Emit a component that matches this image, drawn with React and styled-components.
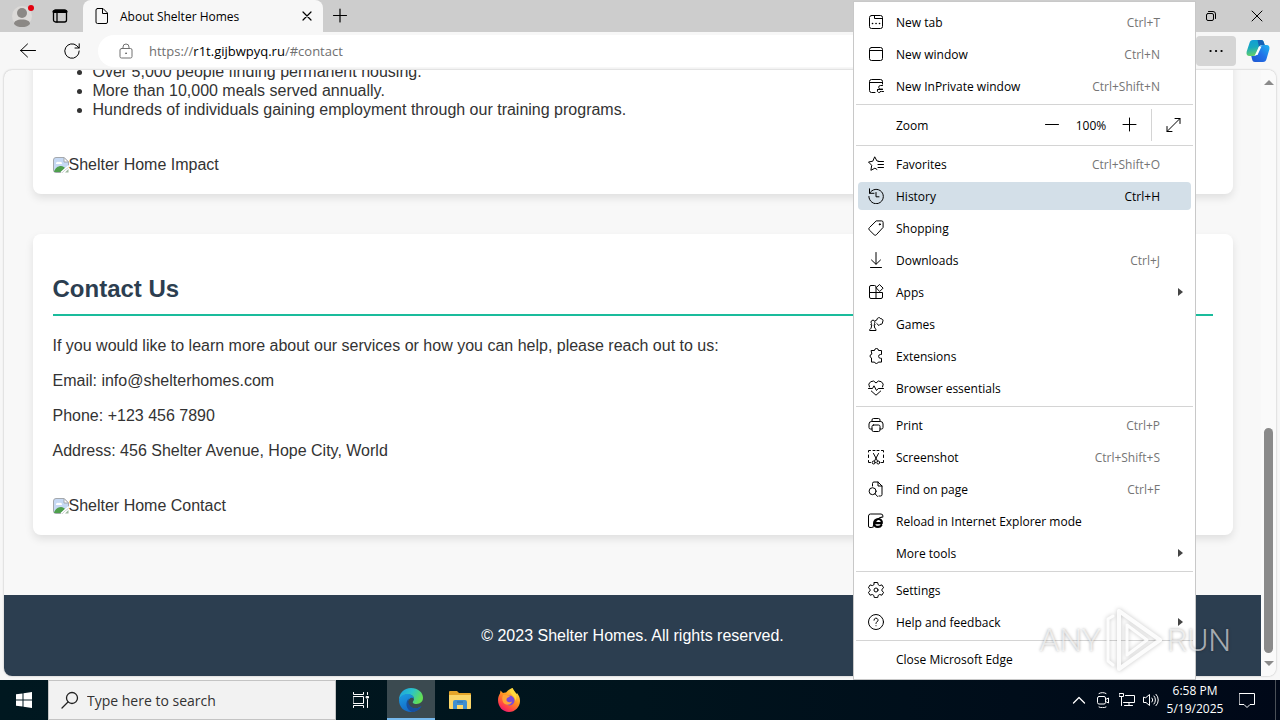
import styled, { createGlobalStyle } from 'styled-components'

const GlobalStyle = createGlobalStyle`
    * {
        box-sizing: border-box;
    }
    body {
        margin: 0;
        font-family: "Open Sans", "Noto Sans", sans-serif;
        font-size: 12px;
        color: #000;
    }
    button, input {
        font-family: inherit;
        font-size: inherit;
        color: inherit;
        border: none;
        background: none;
        padding: 0;
        outline: none;
    }
    svg {
        display: block;
        flex: none;
    }
`

const Desktop = styled.div`
    position: relative;
    display: flex;
    flex-direction: column;
    height: 100vh;
    overflow: hidden;
    background-color: #f7f7f7;
`

/* browser chrome */
const TabStrip = styled.header`
    display: flex;
    align-items: stretch;
    height: 32px;
    background-color: #cdcdcd;
`
const IconButton = styled.button`
    position: relative;
    display: flex;
    align-items: center;
    justify-content: center;
    flex: none;
    width: ${({ $width }) => $width}px;
    height: ${({ $height }) => $height || 32}px;
    border-radius: ${({ $active }) => ($active ? '4px' : '0')};
    background-color: ${({ $active }) => ($active ? '#d5d5d5' : 'transparent')};
`
const Tab = styled.div`
    display: flex;
    align-items: center;
    gap: 10px;
    width: 240px;
    margin-left: 6px;
    padding: 0 8px 0 11px;
    border-radius: 8px 8px 0 0;
    background-color: #f7f7f7;
`
const TabTitle = styled.span`
    flex: 1;
    white-space: nowrap;
`
const WindowButtons = styled.div`
    display: flex;
    margin-left: auto;
`
const Toolbar = styled.nav`
    display: flex;
    align-items: center;
    height: 38px;
    padding-left: 6px;
`
const AddressBar = styled.label`
    display: flex;
    align-items: center;
    flex: 1;
    gap: 15px;
    height: 32px;
    margin: 0 8px 0 4px;
    padding-left: 20px;
    border-radius: 16px;
    background-color: #fff;
    font-size: 13px;
    color: #707070;
`
const Url = styled.a`
    color: #707070;
    text-decoration: none;
    strong {
        font-weight: 400;
        color: #000;
    }
`

/* web page */
const Viewport = styled.div`
    display: flex;
    flex: 1;
    min-height: 0;
    margin: 0 4px 4px;
    border-radius: 8px;
    overflow: hidden;
    background-color: #f8f8f8;
    box-shadow: 0 0 2px rgba(0, 0, 0, 0.3);
`
const Page = styled.div`
    display: flex;
    flex: 1;
    flex-direction: column;
    justify-content: flex-end;
    overflow: hidden;
    font-family: "Liberation Sans", Arial, sans-serif;
    font-size: 16px;
    line-height: 19px;
    color: #333;
`
const Sections = styled.main`
    display: flex;
    flex-direction: column;
    gap: 40px;
    width: 100%;
    max-width: 1200px;
    margin: 0 auto 60px;
`
const Card = styled.section`
    padding: 20px;
    border-radius: 8px;
    background-color: #fff;
    box-shadow: 0 4px 8px rgba(0, 0, 0, 0.1);
`
const Heading = styled.h2`
    margin: 20px 0;
    padding-bottom: 11px;
    border-bottom: 2px solid #1abc9c;
    font-size: 24px;
    line-height: 29px;
    color: #2c3e50;
`
const Paragraph = styled.p`
    margin: 0 0 16px;
`
const List = styled.ul`
    margin: 0 0 16px;
    padding-left: 40px;
`
const MissingImage = styled.div`
    display: flex;
    align-items: center;
    margin-top: 36px;
`
const Footer = styled.footer`
    padding: 31px 20px;
    background-color: #2c3e50;
    color: #fff;
    text-align: center;
`
const Scrollbar = styled.div`
    display: flex;
    flex-direction: column;
    align-items: center;
    justify-content: flex-end;
    gap: 8px;
    width: 15px;
    padding: 10px 0;
    background-color: #fafafa;
`
const Thumb = styled.div`
    width: 9px;
    height: 225px;
    border-radius: 5px;
    background-color: #8a8a8a;
`
const Triangle = styled.div`
    border: 5px solid transparent;
    ${({ $up }) => ($up ? 'border-bottom-color: #8a8a8a; border-top: none; margin-bottom: auto;' : 'border-top-color: #8a8a8a; border-bottom: none;')}
`

/* settings menu, open over the page */
const Menu = styled.div`
    position: absolute;
    top: 1px;
    right: 84px;
    display: flex;
    flex-direction: column;
    width: 343px;
    padding: 4px 0;
    border: 1px solid #c8c8c8;
    background-color: #fff;
`
const MenuSection = styled.div`
    display: flex;
    flex-direction: column;
    gap: 4px;
    padding: 2px 4px;
`
const MenuItem = styled.button`
    display: flex;
    align-items: center;
    gap: 12px;
    height: 28px;
    padding: 0 8px 0 10px;
    border-radius: 4px;
    text-align: left;
    background-color: ${({ $selected }) => ($selected ? '#d3dfe8' : 'transparent')};
`
const MenuIcon = styled.span`
    width: 16px;
    height: 16px;
`
const Shortcut = styled.span`
    margin-left: auto;
    margin-right: 23px;
    color: ${({ $selected }) => ($selected ? '#000' : '#757575')};
`
const SubmenuArrow = styled.span`
    margin-left: auto;
    border-left: 5px solid #444;
    border-top: 4px solid transparent;
    border-bottom: 4px solid transparent;
`
const Separator = styled.hr`
    width: calc(100% - 4px);
    height: 1px;
    margin: 2px;
    border: none;
    background-color: #d4d4d4;
`
const ZoomRow = styled.div`
    display: flex;
    align-items: center;
    height: 36px;
    padding-left: 42px;
    > span:first-child {
        flex: 1;
    }
`
const ZoomValue = styled.span`
    width: 40px;
    text-align: center;
`
const FullScreen = styled.div`
    margin-left: 2px;
    border-left: 1px solid #d4d4d4;
`

/* taskbar */
const Taskbar = styled.footer`
    display: flex;
    align-items: center;
    height: 40px;
    background: linear-gradient(90deg, #001820, #00141d 50%, #000818);
    color: #fff;
`
const SearchBox = styled.label`
    display: flex;
    align-items: center;
    gap: 8px;
    width: 288px;
    height: 40px;
    padding-left: 12px;
    border: 1px solid #c4c4c4;
    background-color: #f2f2f2;
    color: #222;
    input {
        flex: 1;
        min-width: 0;
        font-size: 14px;
    }
    input::placeholder {
        color: #333;
        opacity: 1;
    }
`
const TaskButtons = styled.div`
    display: flex;
    gap: 1px;
`
const TaskButton = styled(IconButton)`
    background-color: ${({ $open }) => ($open ? '#3b4a50' : 'transparent')};
    box-shadow: ${({ $open }) => ($open ? 'inset 0 -2px #76b9ed' : 'none')};
`
const Tray = styled.div`
    display: flex;
    align-items: center;
    height: 100%;
    margin-left: auto;
    padding-right: 4px;
`
const Clock = styled.div`
    width: 64px;
    line-height: 18px;
    text-align: center;
`
const ShowDesktop = styled.div`
    width: 1px;
    height: 40px;
    margin-left: 8px;
    background-color: #4a5058;
`

/* recorder's mark, laid over everything */
const Watermark = styled.div`
    position: absolute;
    right: 49px;
    bottom: 48px;
    display: flex;
    align-items: center;
    gap: 3px;
    font-family: Roboto, "Liberation Sans", sans-serif;
    font-size: 32px;
    font-weight: 300;
    line-height: 1;
    color: rgba(255, 255, 255, 0.6);
    text-shadow: 0 0 3px rgba(0, 0, 0, 0.35);
    pointer-events: none;
    svg {
        filter: drop-shadow(0 0 2px rgba(0, 0, 0, 0.25));
    }
`

function Icon({ size = 16, box = 16, width = 1, color = 'currentColor', children }) {
    return (
        <svg width={size} height={size} viewBox={`0 0 ${box} ${box}`} fill="none" stroke={color} strokeWidth={width} strokeLinecap="round" strokeLinejoin="round">
            {children}
        </svg>
    )
}

const icons = {
    newTab: <><rect x="1.5" y="1.5" width="13" height="13" rx="2" /><path d="M6.5 1.5v3h8" /><path d="M4.5 9.5h.1M8 9.5h.1M11.5 9.5h.1" strokeWidth="1.6" /></>,
    newWindow: <><rect x="1.5" y="1.5" width="13" height="13" rx="2" /><path d="M1.5 4.5h13" /></>,
    inPrivate: <><path d="M7 14.5H3.5a2 2 0 0 1-2-2v-9a2 2 0 0 1 2-2h9a2 2 0 0 1 2 2V6M1.5 4.5h13M14.5 7.5h-2a1.8 1.8 0 0 0 0 3.6h2M9.5 11.5h5M15.5 13.5h-1.8M12.8 13.3a1.8 1.8 0 1 1-3.4-1.2" /></>,
    favorites: <><path d="M10.5 5.2 9 5 6.7.8 4.8 5.2.5 6l3.2 3.3-.8 5 4-2.1 2 1.2M10.5 5.5h5M10 8.5h5.5M10 11.5h5.5" /></>,
    history: <><path d="M1.5.8v4.5H6M1.7 5.2A7.2 7.2 0 1 1 .9 8.5M8 4.5v4.3h3" /></>,
    shopping: <><path d="M8.6.9h5a1.5 1.5 0 0 1 1.5 1.5v5l-6.800 7.400a1.500 1.500 0 0 1-2.100 0L1.200 9.900a1.500 1.500 0 0 1 0-2.100z" /><circle cx="11.8" cy="4.3" r=".6" fill="currentColor" /></>,
    downloads: <path d="M8 .5V12M3.5 8 8 12.3 12.500 8M2.500 15.500h11" />,
    apps: <><path d="M8 8.500v6M1.500 8.500h13V13a1.500 1.500 0 0 1-1.500 1.500H3A1.500 1.500 0 0 1 1.500 13V3A1.500 1.500 0 0 1 3 1.500h3.500A1.500 1.500 0 0 1 8 3v5.500M11.700.8l3.400 3.300-3.400 3.400-3.300-3.400z" /></>,
    games: <><path d="M2 14.500h6v-1.200l-1.200-1.100-.7-3.400h1L6.500 7.500a2 2 0 1 0-3 0l-.7 1.300h1l-.7 3.400L2 13.300z" /><path d="M7.500 4.500 9 3.800a2 2 0 0 1 3.800-1 1.900 1.900 0 0 1 1.700 3.200 1.900 1.900 0 0 1-2.500 2.300l-1 1.300-2.200-2" /></>,
    extensions: <path d="M3.500 2.500h3a2 2 0 0 1 4 0h3v4h-1a1.800 1.800 0 0 0 0 3.800h1v3.800h-3.200a2 2 0 0 1-3.800 0h-3v-4.200a1.900 1.900 0 0 1 0-3.700z" />,
    essentials: <path d="M1.400 7A3.800 3.800 0 0 1 8 3a3.800 3.800 0 0 1 6.600 4M.5 8.500h4L6 5.800l2.500 4.700 1.700-2h5.300M3.300 11 8 15.200l4.700-4.200" />,
    print: <><path d="M4 12H2.500A1.500 1.500 0 0 1 1 10.500V7a2.500 2.500 0 0 1 2.500-2.500h9A2.500 2.500 0 0 1 15 7v3.500a1.500 1.500 0 0 1-1.500 1.500H12M4 4.500V3a1.500 1.500 0 0 1 1.500-1.500h5A1.500 1.500 0 0 1 12 3v1.500" /><rect x="4" y="8" width="8" height="6.5" rx="1.5" /></>,
    screenshot: <><path d="M2.500 1.500h-2V3M.5 6v2.500M.5 11.500v2h2M5 1.500h2M9 1.500h2M13.500 1.500h2V3M15.500 6v2.500M15.500 11.500v2h-2M5.500 4.500l4 7.500M10.500 4.500l-4 7.500" /><circle cx="5.7" cy="13.5" r="1.5" /><circle cx="10.3" cy="13.5" r="1.5" /></>,
    find: <><path d="M4.500 5V2.500A1.500 1.500 0 0 1 6 1h4l4 4v8.500a1.500 1.500 0 0 1-1.500 1.500H11M10 1v4h4M6.800 12.500l2.800 3" /><circle cx="4.6" cy="10.2" r="3.5" /></>,
    reload: <><path d="M3.500 14.500H2A1.500 1.500 0 0 1 .5 13V3a2 2 0 0 1 2-2H13a2 2 0 0 1 2 2" /><path d="M6.500 10.200h7.300c.3-2.600-1.200-4.200-3.500-4.200-2.500 0-4.200 1.800-4.200 4.200 0 2.300 1.700 3.700 3.900 3.700 1.600 0 2.700-.6 3.300-1.700" strokeWidth="2.2" /><path d="M14.800 3.800C11 4 6 8.500 4.800 14.500" strokeWidth="1.2" /></>,
    settings: <><path d="M6.300.5h3.400l.5 2.200 1.500.9 2.200-.7 1.700 2.900-1.700 1.500v1.500l1.700 1.500-1.700 2.900-2.200-.7-1.500.9-.5 2.200H6.300l-.5-2.200-1.500-.9-2.200.7L.4 10.300l1.700-1.500V7.300L.4 5.800l1.700-2.900 2.200.7 1.500-.9z" /><circle cx="8" cy="8" r="2" /></>,
    help: <><circle cx="8" cy="8" r="7.5" /><path d="M6 6.200a2 2 0 1 1 3 1.700c-.7.4-1 .8-1 1.600M8 11.700v.1" /></>,
}

const menuGroups = [
    [
        { icon: 'newTab', label: 'New tab', shortcut: 'Ctrl+T' },
        { icon: 'newWindow', label: 'New window', shortcut: 'Ctrl+N' },
        { icon: 'inPrivate', label: 'New InPrivate window', shortcut: 'Ctrl+Shift+N' },
    ],
    'zoom',
    [
        { icon: 'favorites', label: 'Favorites', shortcut: 'Ctrl+Shift+O' },
        { icon: 'history', label: 'History', shortcut: 'Ctrl+H', selected: true },
        { icon: 'shopping', label: 'Shopping' },
        { icon: 'downloads', label: 'Downloads', shortcut: 'Ctrl+J' },
        { icon: 'apps', label: 'Apps', submenu: true },
        { icon: 'games', label: 'Games' },
        { icon: 'extensions', label: 'Extensions' },
        { icon: 'essentials', label: 'Browser essentials' },
    ],
    [
        { icon: 'print', label: 'Print', shortcut: 'Ctrl+P' },
        { icon: 'screenshot', label: 'Screenshot', shortcut: 'Ctrl+Shift+S' },
        { icon: 'find', label: 'Find on page', shortcut: 'Ctrl+F' },
        { icon: 'reload', label: 'Reload in Internet Explorer mode' },
        { label: 'More tools', submenu: true },
    ],
    [
        { icon: 'settings', label: 'Settings' },
        { icon: 'help', label: 'Help and feedback', submenu: true },
    ],
    [{ label: 'Close Microsoft Edge' }],
]

function Zoom() {
    return (
        <ZoomRow>
            <span>Zoom</span>
            <IconButton $width={38} aria-label="Zoom out"><Icon><path d="M1.500 7.500h13" /></Icon></IconButton>
            <ZoomValue>100%</ZoomValue>
            <IconButton $width={38} aria-label="Zoom in"><Icon><path d="M1 7.500h13M7.500 1v13" /></Icon></IconButton>
            <FullScreen>
                <IconButton $width={43} aria-label="Full screen"><Icon><path d="M1 14.500l13-13M9 1.500h5v5M1 9.500v5h5" /></Icon></IconButton>
            </FullScreen>
        </ZoomRow>
    )
}

function MenuGroup({ group }) {
    if (group === 'zoom') return <Zoom />
    return (
        <MenuSection>
            {group.map(({ icon, label, shortcut, selected, submenu }) => (
                <MenuItem key={label} $selected={selected}>
                    <MenuIcon>{icon && <Icon>{icons[icon]}</Icon>}</MenuIcon>
                    {label}
                    {shortcut && <Shortcut $selected={selected}>{shortcut}</Shortcut>}
                    {submenu && <SubmenuArrow />}
                </MenuItem>
            ))}
        </MenuSection>
    )
}

function BrokenImage({ alt }) {
    return (
        <MissingImage>
            <svg width="16" height="16" viewBox="0 0 16 16">
                <path d="M3 .5h8L15.500 5v5L9 15.500H3A2.500 2.500 0 0 1 .5 13V3A2.500 2.500 0 0 1 3 .5z" fill="#c6d9f4" stroke="#a4a8ad" />
                <path d="M3 7a2 2 0 0 1 3-2 2 2 0 0 1 3 2z" fill="#fff" />
                <path d="M1 15c1-4 4-6 7-6 2 0 3 1 4 2l-4 4z" fill="#4e9f4c" />
                <path d="M11 .5V5h4.500z" fill="#fff" stroke="#a4a8ad" />
                <path d="m8 15.500 8-7" stroke="#fff" strokeWidth="1.5" />
                <path d="M12 15.500h3.500V12z" fill="#9db79d" />
            </svg>
            {alt}
        </MissingImage>
    )
}

function EdgeLogo() {
    return (
        <svg width="24" height="24" viewBox="0 0 24 24">
            <defs>
                <linearGradient id="edgeTop" x1="0" y1="0" x2="1" y2="0.4">
                    <stop offset="0" stopColor="#1b9de2" />
                    <stop offset="0.55" stopColor="#2bc3c9" />
                    <stop offset="1" stopColor="#62de55" />
                </linearGradient>
                <linearGradient id="edgeSide" x1="0" y1="0" x2="0.5" y2="1">
                    <stop offset="0" stopColor="#1b9de2" />
                    <stop offset="1" stopColor="#1466c4" />
                </linearGradient>
            </defs>
            <path d="M0 12C0 5 5 0 12 0c7 0 12 4.500 12 9.800 0 4-3 6.200-6.300 6.200-2.400 0-4-.8-4-1.800 0-.7 1.300-1.200 1.300-3.400C15 8 12 6.500 9 6.500 4 6.500 1 9 0 12z" fill="url(#edgeTop)" />
            <path d="M0 12c1-4 4.500-6 8.500-6 3.500 0 6.500 2 6.500 5-1-1.500-2.500-1.500-3.500-1C8 12 8 17 12 19.500c3.500 2 7.500 1 10.500-1.500C20 22 16 24 12 24 5 24 0 19 0 12z" fill="url(#edgeSide)" />
            <path d="M10 10.500c-4 3-3.500 11 3 13.500 4 0 8-2.500 9.500-6-3 2.500-7 3-10 1-3-2-4-5.500-2.500-8.500z" fill="#174f9e" />
        </svg>
    )
}

function FolderLogo() {
    return (
        <svg width="22" height="20" viewBox="0 0 22 20">
            <path d="M0 2a1 1 0 0 1 1-1h7l2 2h11a1 1 0 0 1 1 1v3H0z" fill="#e5a529" />
            <path d="M0 5h22v13a1 1 0 0 1-1 1H1a1 1 0 0 1-1-1z" fill="#fbd669" />
            <path d="M4 19v-7a2 2 0 0 1 2-2h10a2 2 0 0 1 2 2v7h-4v-4H8v4z" fill="#3f8fd0" />
            <path d="M8 12h6" stroke="#2a6ca8" />
        </svg>
    )
}

function FirefoxLogo() {
    return (
        <svg width="24" height="24" viewBox="0 0 24 24">
            <defs>
                <linearGradient id="fox" x1="0.8" y1="0" x2="0.2" y2="1">
                    <stop offset="0" stopColor="#fff044" />
                    <stop offset="0.45" stopColor="#ff9020" />
                    <stop offset="0.8" stopColor="#ff3a4c" />
                    <stop offset="1" stopColor="#e3107c" />
                </linearGradient>
            </defs>
            <path d="M1 12c0-3 1-5 2-6.500l.5-3L6 5c1-.5 2-.7 3-.5C11 2 13 1 15.500 0c0 2 1 3 2.500 4l1.500 2L20 5c2 2.500 3 5 3 8 0 6-5 11-11 11S1 19 1 12z" fill="url(#fox)" />
            <circle cx="12.5" cy="12.5" r="5" fill="#7b4bd8" />
            <path d="M6 7c2-1 4 .5 6 .5 1 0 1.500.8 0 1.600-1.500.9-2.500 1-2.500 2.900 0 2 3 3 5.500 1.500-1 4-7 4.500-9 .5-1-2-1-5 0-7z" fill="#ffa436" />
            <path d="M13 3c0 4 6 5 5 10 2-3 2-6 0-9L15.500 0C14 1 13 2 13 3z" fill="#ffd83d" />
        </svg>
    )
}

function CopilotLogo() {
    return (
        <svg width="24" height="24" viewBox="0 0 24 24">
            <defs>
                <linearGradient id="copLeft" x1="0" y1="0" x2="0.2" y2="1">
                    <stop offset="0" stopColor="#109cd8" />
                    <stop offset="0.5" stopColor="#18a9bf" />
                    <stop offset="1" stopColor="#63cf6a" />
                </linearGradient>
                <linearGradient id="copRight" x1="1" y1="0" x2="0" y2="1">
                    <stop offset="0" stopColor="#1cb6f0" />
                    <stop offset="0.5" stopColor="#2271e8" />
                    <stop offset="1" stopColor="#1e55d0" />
                </linearGradient>
            </defs>
            <path d="M7 1h8c2 0 2.500 1 3 3l.7 2H16c-2 0-3 1-3.500 3l-2 5c-.6 2-1.500 3-3.500 3H3.500C1 17 0 15 .7 12.500L3.500 4C4 2 5 1 7 1z" fill="url(#copLeft)" />
            <path d="M17 23H9c-2 0-2.500-1-3-3l-.7-3H8c2 0 3-1 3.500-3l2-5c.6-2 1.500-3 3.500-3h3.500c2.500 0 3.500 2 2.800 4.500L20.500 20c-.5 2-1.500 3-3.500 3z" fill="url(#copRight)" />
            <path d="M11.500 1H15c2 0 2.500 1 3 3l.7 2H16c-1.500 0-2.500.6-3 2z" fill="#1560b4" />
            <path d="M13 7.500h2.500L11.500 16H9z" fill="#fff" />
        </svg>
    )
}

function BrowserChrome() {
    return (
        <>
            <TabStrip>
                <IconButton $width={43} aria-label="Profile">
                    <svg width="24" height="24" viewBox="0 0 24 24">
                        <circle cx="12" cy="12" r="10" fill="#dcdad8" />
                        <circle cx="12" cy="9" r="5" fill="#8b8885" />
                        <path d="M4 20c0-3 3-4.500 8-4.500s8 1.500 8 4.500c-2 2.500-5 3-8 3s-6-.5-8-3z" fill="#8b8885" />
                        <circle cx="21" cy="4" r="3" fill="#e3000f" />
                    </svg>
                </IconButton>
                <IconButton $width={34} aria-label="Tab actions">
                    <Icon><rect x="1.5" y="2" width="13" height="12" rx="2" strokeWidth="1.3" /><path d="M2 3.500h12" strokeWidth="3" /><path d="M5 4v10" strokeWidth="1.3" /></Icon>
                </IconButton>
                <Tab>
                    <Icon><path d="M3.500.5H9L13.500 5v9a1.500 1.500 0 0 1-1.500 1.500H3.500A1.500 1.500 0 0 1 2 14V2A1.500 1.500 0 0 1 3.500.5zM8.500.5v5h5" /></Icon>
                    <TabTitle>About Shelter Homes</TabTitle>
                    <IconButton $width={16} aria-label="Close tab"><Icon><path d="m4 4 8 8M12 4l-8 8" strokeWidth="1.2" /></Icon></IconButton>
                </Tab>
                <IconButton $width={34} aria-label="New tab"><Icon><path d="M1.500 7.500h13M8 1v13" strokeWidth="1.2" /></Icon></IconButton>
                <WindowButtons>
                    <IconButton $width={46} aria-label="Restore"><Icon><rect x="3.5" y="5.5" width="7" height="7" rx="1.5" /><path d="M5.500 3.500H10A2.500 2.500 0 0 1 12.500 6v4.500" /></Icon></IconButton>
                    <IconButton $width={46} aria-label="Close"><Icon><path d="m3 3 10 10M13 3 3 13" /></Icon></IconButton>
                </WindowButtons>
            </TabStrip>
            <Toolbar>
                <IconButton $width={44} aria-label="Back"><Icon><path d="M15.500 7.500H.5M7.500 1 .7 7.500 7.500 14" /></Icon></IconButton>
                <IconButton $width={44} aria-label="Refresh"><Icon><path d="M15.200 8A7.200 7.200 0 1 1 12.800 2.700L15 5M15.200.8V5H11" /></Icon></IconButton>
                <AddressBar>
                    <Icon><rect x="2" y="5.5" width="12" height="9.5" rx="1.5" /><path d="M5 5.500V4a3 3 0 0 1 6 0v1.500" /><circle cx="8" cy="10.3" r=".5" fill="currentColor" /></Icon>
                    <Url href="#contact">https://<strong>r1t.gijbwpyq.ru</strong>/#contact</Url>
                </AddressBar>
                <IconButton $width={40} $height={30} $active aria-label="Settings and more">
                    <Icon><path d="M2.500 8h.1M8 8h.1M13.500 8h.1" strokeWidth="2.2" /></Icon>
                </IconButton>
                <IconButton $width={44} aria-label="Copilot"><CopilotLogo /></IconButton>
            </Toolbar>
        </>
    )
}

function App() {
    return (
        <Desktop>
            <GlobalStyle />
            <BrowserChrome />
            <Viewport>
                <Page>
                    <Sections>
                        <Card>
                            <List>
                                <li>Over 5,000 people finding permanent housing.</li>
                                <li>More than 10,000 meals served annually.</li>
                                <li>Hundreds of individuals gaining employment through our training programs.</li>
                            </List>
                            <BrokenImage alt="Shelter Home Impact" />
                        </Card>
                        <Card id="contact">
                            <Heading>Contact Us</Heading>
                            <Paragraph>If you would like to learn more about our services or how you can help, please reach out to us:</Paragraph>
                            <Paragraph>Email: info@shelterhomes.com</Paragraph>
                            <Paragraph>Phone: +123 456 7890</Paragraph>
                            <Paragraph>Address: 456 Shelter Avenue, Hope City, World</Paragraph>
                            <BrokenImage alt="Shelter Home Contact" />
                        </Card>
                    </Sections>
                    <Footer>© 2023 Shelter Homes. All rights reserved.</Footer>
                </Page>
                <Scrollbar>
                    <Triangle $up />
                    <Thumb />
                    <Triangle />
                </Scrollbar>
            </Viewport>
            <Taskbar>
                <IconButton $width={48} $height={40} aria-label="Start">
                    <svg width="16" height="16" viewBox="0 0 16 16" fill="#fff">
                        <path d="M0 2.300 6.500 1.400v6.100H0zM7.500 1.200 16 0v7.500H7.500zM0 8.500h6.500v6.100L0 13.700zM7.500 8.500H16V16l-8.500-1.200z" />
                    </svg>
                </IconButton>
                <SearchBox>
                    <Icon size={18} box={18} width={1.3}><circle cx="11" cy="7" r="5.5" /><path d="M7 11 1 17" /></Icon>
                    <input type="text" placeholder="Type here to search" />
                </SearchBox>
                <TaskButtons>
                    <TaskButton $width={50} $height={40} aria-label="Task view">
                        <Icon><path d="M.5.5v2h10v-2M.5 4.500h10v7H.5zM.5 15.500v-2h10v2M14.500.5v2M14.500 7.500v8" /><path d="M13.500 4.500h2V6h-2z" fill="#fff" /></Icon>
                    </TaskButton>
                    <TaskButton $width={48} $height={40} $open aria-label="Microsoft Edge"><EdgeLogo /></TaskButton>
                    <TaskButton $width={48} $height={40} aria-label="File Explorer"><FolderLogo /></TaskButton>
                    <TaskButton $width={48} $height={40} aria-label="Firefox"><FirefoxLogo /></TaskButton>
                </TaskButtons>
                <Tray>
                    <IconButton $width={24} aria-label="Show hidden icons"><Icon width={1.3}><path d="m2.500 11 5.500-5.500 5.500 5.500" /></Icon></IconButton>
                    <IconButton $width={24} aria-label="Meet now"><Icon><rect x="2.5" y="4.5" width="8" height="7.5" rx="1.5" /><path d="m10.500 7.500 3-1.500v5l-3-1.500M4 1.500C6 .3 9 .3 11 1.500M4 15c2 1 5 1 7 0" /></Icon></IconButton>
                    <IconButton $width={24} aria-label="Network"><Icon><path d="M.5 1.500h4v3h-4zM2.500 4.500v9M6.500 3.500h9v7h-11M10 10.500v3M5.500 13.500h8" /></Icon></IconButton>
                    <IconButton $width={24} aria-label="Volume"><Icon><path d="M.5 5.500v5H3l3.500 3v-11L3 5.500zM9 6a3 3 0 0 1 0 4M11 4a6 6 0 0 1 0 8M13 2.300a8 8 0 0 1 0 11.400" /></Icon></IconButton>
                    <Clock>6:58 PM<br />5/19/2025</Clock>
                    <IconButton $width={40} aria-label="Notifications"><Icon><path d="M.5 1.500h15v11H11l-3 3-3-3H.5z" /></Icon></IconButton>
                    <ShowDesktop />
                </Tray>
            </Taskbar>
            <Menu>
                {menuGroups.map((group, index) => (
                    <div key={index}>
                        {index > 0 && <Separator />}
                        <MenuGroup group={group} />
                    </div>
                ))}
            </Menu>
            <Watermark>
                <span>ANY</span>
                <svg width="60" height="64" viewBox="0 0 60 64" fill="none" stroke="#fff" strokeOpacity="0.9" strokeLinejoin="round" strokeLinecap="round">
                    <path d="M9 8 4 11v42l5 4" strokeWidth="3" />
                    <path d="M15 3v58l41-29z" strokeWidth="4" />
                    <path d="M23 17v30l20-15z" strokeWidth="3" />
                </svg>
                <span>RUN</span>
            </Watermark>
        </Desktop>
    )
}

export default App
